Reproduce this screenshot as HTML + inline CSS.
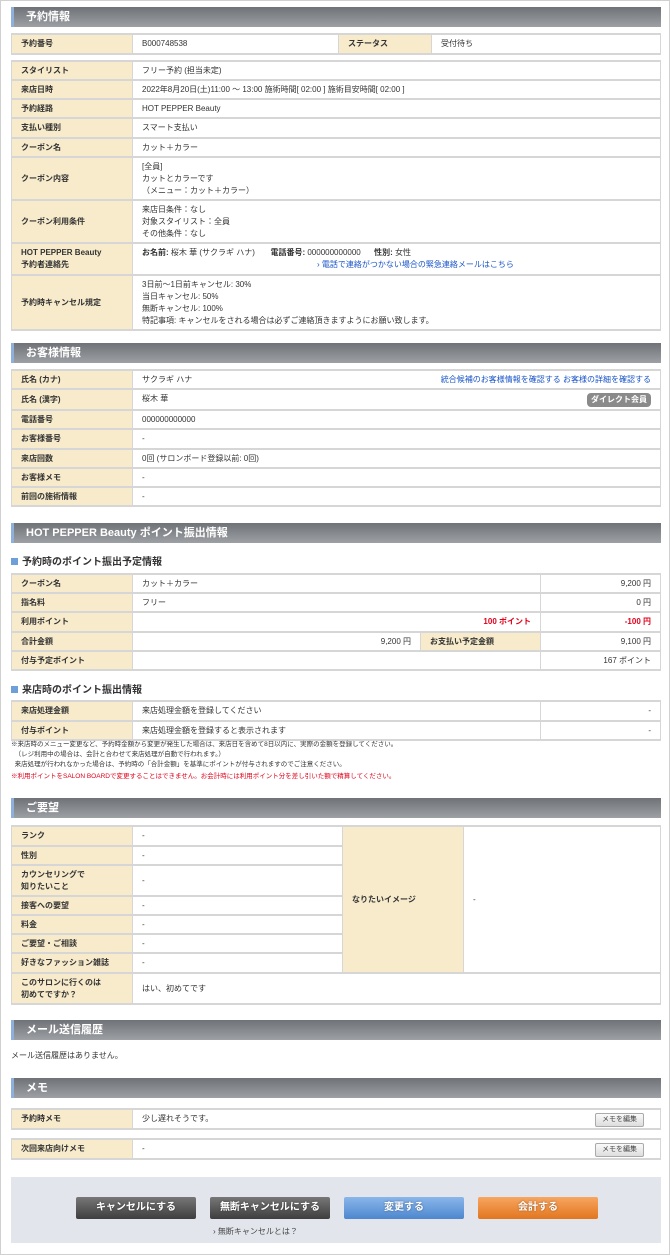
<!DOCTYPE html>
<html><head><meta charset="utf-8"><style>
*{margin:0;padding:0;box-sizing:border-box}
body{width:670px;height:1255px;background:#fff;font-family:"Liberation Sans","Noto Sans CJK JP",sans-serif;font-size:8px;color:#333;position:relative;overflow:hidden}
.frame{position:absolute;left:0;top:0;width:670px;height:1255px;border:1px solid #d0d0d0}
.h{position:absolute;left:11px;width:650px;height:20px;background:linear-gradient(#6f7276,#9da0a4);border-left:3px solid #8eb1dc;color:#fff;font-weight:bold;font-size:11px;line-height:20px;padding-left:12px}
table{position:absolute;left:11px;width:650px;border-collapse:collapse;border:1px solid #cfcfcf}
td{border:1px solid #d6d6d6;border-width:2px 1px;padding:0 9px;vertical-align:middle;line-height:12px}
td.l{background:#f7ebcc;font-weight:bold;width:121px;color:#333}
.r{text-align:right}
.red{color:#e0001a;font-weight:bold}
a{color:#1a55c8}
.sub{position:absolute;left:11px;font-size:10px;font-weight:bold;color:#333}
.sub:before{content:"";display:inline-block;width:7px;height:7px;background:#6f9fd8;margin-right:4px}
.btn{position:absolute;top:1197px;width:120px;height:22px;border-radius:2px;color:#fff;font-weight:bold;font-size:10px;text-align:center;line-height:22px;text-shadow:0 0 2px rgba(0,0,0,.4)}
.mtd{position:relative}
.mb{position:absolute;right:16px;top:3px;border:1px solid #aaa;background:linear-gradient(#fafafa,#ddd);font-size:7px;padding:1px 6px;border-radius:2px;color:#444;line-height:10px}
</style></head><body>
<div class="frame"></div>

<div class="h" style="top:7px">予約情報</div>
<table style="top:33px"><tr style="height:20px"><td class="l">予約番号</td><td style="width:206px">B000748538</td><td class="l" style="width:93px">ステータス</td><td>受付待ち</td></tr></table>
<table style="top:60px">
<tr style="height:19px"><td class="l">スタイリスト</td><td>フリー予約 (担当未定)</td></tr>
<tr style="height:19px"><td class="l">来店日時</td><td>2022年8月20日(土)11:00 ～ 13:00 施術時間[ 02:00 ] 施術目安時間[ 02:00 ]</td></tr>
<tr style="height:19px"><td class="l">予約経路</td><td>HOT PEPPER Beauty</td></tr>
<tr style="height:20px"><td class="l">支払い種別</td><td>スマート支払い</td></tr>
<tr style="height:19px"><td class="l">クーポン名</td><td>カット＋カラー</td></tr>
<tr style="height:43px"><td class="l">クーポン内容</td><td>[全員]<br>カットとカラーです<br>（メニュー：カット＋カラー）</td></tr>
<tr style="height:43px"><td class="l">クーポン利用条件</td><td>来店日条件：なし<br>対象スタイリスト：全員<br>その他条件：なし</td></tr>
<tr style="height:32px"><td class="l">HOT PEPPER Beauty<br>予約者連絡先</td><td><b>お名前:</b> 桜木 華 (サクラギ ハナ) &nbsp;&nbsp;&nbsp;&nbsp;&nbsp;&nbsp;<b>電話番号:</b> 000000000000 &nbsp;&nbsp;&nbsp;&nbsp;&nbsp;<b>性別:</b> 女性<br><span style="padding-left:175px;color:#1a55c8">› 電話で連絡がつかない場合の緊急連絡メールはこちら</span></td></tr>
<tr style="height:55px"><td class="l">予約時キャンセル規定</td><td>3日前～1日前キャンセル: 30%<br>当日キャンセル: 50%<br>無断キャンセル: 100%<br>特記事項: キャンセルをされる場合は必ずご連絡頂きますようにお願い致します。</td></tr>
</table>

<div class="h" style="top:343px">お客様情報</div>
<table style="top:369px">
<tr style="height:19px"><td class="l">氏名 (カナ)</td><td>サクラギ ハナ<span style="float:right"><a>統合候補のお客様情報を確認する</a> <a>お客様の詳細を確認する</a></span></td></tr>
<tr style="height:21px"><td class="l">氏名 (漢字)</td><td>桜木 華<span style="float:right;background:#8a8a8a;color:#fff;font-weight:bold;border-radius:4px;padding:1px 4px">ダイレクト会員</span></td></tr>
<tr style="height:19px"><td class="l">電話番号</td><td>000000000000</td></tr>
<tr style="height:20px"><td class="l">お客様番号</td><td>-</td></tr>
<tr style="height:19px"><td class="l">来店回数</td><td>0回 (サロンボード登録以前: 0回)</td></tr>
<tr style="height:19px"><td class="l">お客様メモ</td><td>-</td></tr>
<tr style="height:19px"><td class="l">前回の施術情報</td><td>-</td></tr>
</table>

<div class="h" style="top:523px">HOT PEPPER Beauty ポイント振出情報</div>
<div class="sub" style="top:553px">予約時のポイント振出予定情報</div>
<table style="top:573px">
<tr style="height:19px"><td class="l">クーポン名</td><td colspan="2">カット＋カラー</td><td class="r" style="width:120px">9,200 円</td></tr>
<tr style="height:19px"><td class="l">指名料</td><td colspan="2">フリー</td><td class="r">0 円</td></tr>
<tr style="height:20px"><td class="l">利用ポイント</td><td colspan="2" class="r red">100 ポイント</td><td class="r red">-100 円</td></tr>
<tr style="height:19px"><td class="l">合計金額</td><td class="r">9,200 円</td><td class="l" style="width:120px">お支払い予定金額</td><td class="r">9,100 円</td></tr>
<tr style="height:19px"><td class="l">付与予定ポイント</td><td colspan="2"></td><td class="r">167 ポイント</td></tr>
</table>
<div class="sub" style="top:681px">来店時のポイント振出情報</div>
<table style="top:700px">
<tr style="height:20px"><td class="l">来店処理金額</td><td>来店処理金額を登録してください</td><td class="r" style="width:120px">-</td></tr>
<tr style="height:19px"><td class="l">付与ポイント</td><td>来店処理金額を登録すると表示されます</td><td class="r">-</td></tr>
</table>
<div style="position:absolute;left:11px;top:740px;font-size:6.5px;line-height:10px">※来店時のメニュー変更など、予約時金額から変更が発生した場合は、来店日を含めて8日以内に、実際の金額を登録してください。<br>&nbsp;&nbsp;（レジ利用中の場合は、会計と合わせて来店処理が自動で行われます。）<br>&nbsp;&nbsp;来店処理が行われなかった場合は、予約時の「合計金額」を基準にポイントが付与されますのでご注意ください。<br><span style="color:#e0001a;line-height:14px">※利用ポイントをSALON BOARDで変更することはできません。お会計時には利用ポイント分を差し引いた額で精算してください。</span></div>

<div class="h" style="top:798px">ご要望</div>
<table style="top:825px">
<tr style="height:20px"><td class="l">ランク</td><td style="width:210px">-</td><td class="l" rowspan="7">なりたいイメージ</td><td rowspan="7">-</td></tr>
<tr style="height:19px"><td class="l">性別</td><td>-</td></tr>
<tr style="height:31px"><td class="l">カウンセリングで<br>知りたいこと</td><td>-</td></tr>
<tr style="height:19px"><td class="l">接客への要望</td><td>-</td></tr>
<tr style="height:19px"><td class="l">料金</td><td>-</td></tr>
<tr style="height:19px"><td class="l">ご要望・ご相談</td><td>-</td></tr>
<tr style="height:20px"><td class="l">好きなファッション雑誌</td><td>-</td></tr>
<tr style="height:31px"><td class="l">このサロンに行くのは<br>初めてですか？</td><td colspan="3">はい、初めてです</td></tr>
</table>

<div class="h" style="top:1020px">メール送信履歴</div>
<div style="position:absolute;left:11px;top:1050px">メール送信履歴はありません。</div>

<div class="h" style="top:1078px">メモ</div>
<table style="top:1108px"><tr style="height:20px"><td class="l">予約時メモ</td><td class="mtd">少し遅れそうです。<span class="mb">メモを編集</span></td></tr></table>
<table style="top:1138px"><tr style="height:20px"><td class="l">次回来店向けメモ</td><td class="mtd">-<span class="mb">メモを編集</span></td></tr></table>

<div style="position:absolute;left:11px;top:1177px;width:650px;height:66px;background:#e2e5ec"></div>
<div class="btn" style="left:76px;background:linear-gradient(#777,#3e3e3e)">キャンセルにする</div>
<div class="btn" style="left:210px;background:linear-gradient(#777,#3e3e3e)">無断キャンセルにする</div>
<div class="btn" style="left:344px;background:linear-gradient(#8ab6ea,#4d87cf)">変更する</div>
<div class="btn" style="left:478px;background:linear-gradient(#f7a560,#e2761f)">会計する</div>
<div style="position:absolute;left:213px;top:1226px;font-size:8px;color:#444">› 無断キャンセルとは？</div>
</body></html>
